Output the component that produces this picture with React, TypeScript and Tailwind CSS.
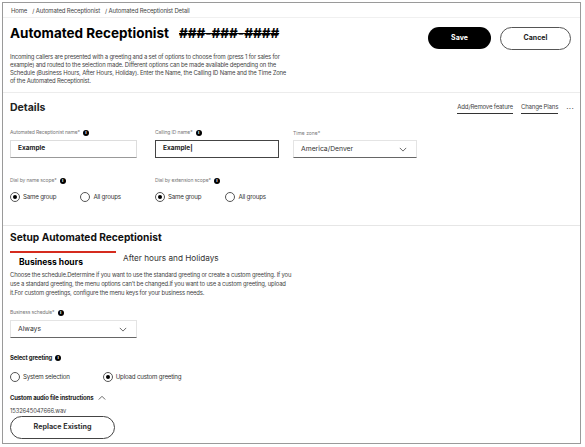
function Info() {
  return (
    <span className="inline-flex h-[6px] w-[6px] items-center justify-center rounded-full bg-black text-[5px] font-bold leading-none text-white">
      i
    </span>
  );
}

function FieldLabel({ text, info = true }: { text: string; info?: boolean }) {
  return (
    <div className="flex h-[9px] items-center gap-[3px] text-[5px] tracking-[-0.12px] text-[#777]">
      <span>{text}*</span>
      {info && <Info />}
    </div>
  );
}

function Radio({ label, checked = false }: { label: string; checked?: boolean }) {
  return (
    <div className="flex items-center gap-[3px] text-[6.2px] tracking-[-0.2px] text-[#333]">
      <span className="flex h-[10px] w-[10px] items-center justify-center rounded-full border border-[#555] bg-white">
        {checked && <span className="h-[4px] w-[4px] rounded-full bg-black" />}
      </span>
      {label}
    </div>
  );
}

function Chevron({ up = false }: { up?: boolean }) {
  return (
    <svg width="8" height="5" viewBox="0 0 10 6" fill="none" stroke="#444" strokeWidth="1">
      <path d={up ? "M1 5.5 5 1.5 9 5.5" : "M1 1 5 5 9 1"} />
    </svg>
  );
}

function Select({ value, width }: { value: string; width: string }) {
  return (
    <div className={`flex h-[18px] items-center justify-between border border-[#e4e4e4] border-b-[#666] pl-[7px] pr-[9px] text-[6.8px] text-[#333] ${width}`}>
      {value}
      <Chevron />
    </div>
  );
}

export default function App() {
  return (
    <div className="h-[447px] w-[585px] bg-white pl-[2px] pt-[2px] font-['Inter',sans-serif] text-black">
      <div className="h-[442px] w-[579px] overflow-hidden border border-[#9a9a9a] bg-white">
        <div className="flex h-[14px] items-center gap-[5px] pl-[8px] pt-[1px] text-[6px] tracking-[-0.15px] text-[#444]">
          <span>Home</span>
          <span>/ Automated Receptionist</span>
          <span>/ Automated Receptionist Detail</span>
        </div>
        <div className="h-[1px] bg-[#f0f0f0]" />

        <div className="flex items-start justify-between pl-[7px] pr-[9px] pt-[9px]">
          <div className="w-[278px]">
            <h1 className="flex h-[13px] items-center gap-[10px] whitespace-nowrap text-[13.5px] font-bold leading-none">
              Automated Receptionist
              <span className="text-[13.5px] font-bold line-through">###-###-####</span>
            </h1>
            <p className="mt-[13px] text-[5.9px] leading-[8px] tracking-[-0.17px] text-[#444]">
              Incoming callers are presented with a greeting and a set of options to choose from (press 1 for sales for example) and routed to the selection made. Different options can be made available depending on the Schedule (Business Hours, After Hours, Holiday). Enter the Name, the Calling ID Name and the Time Zone of the Automated Receptionist.
            </p>
          </div>
          <div className="flex gap-[9px]">
            <button className="h-[22px] w-[63px] rounded-full bg-black text-[7px] font-bold text-white">Save</button>
            <button className="h-[23px] w-[71px] rounded-full border border-[#555] bg-white text-[7px] font-bold text-[#222]">Cancel</button>
          </div>
        </div>

        <div className="mt-[7px] h-[1px] bg-[#ececec]" />

        <div className="flex items-center justify-between pl-[7px] pr-[6px] pt-[8px]">
          <h2 className="text-[10.5px] font-bold leading-[14px] text-[#222]">Details</h2>
          <div className="flex items-center gap-[8px] text-[6.1px] tracking-[-0.2px] text-[#444]">
            <span className="border-b border-[#333] pb-[1px]">Add/Remove feature</span>
            <span className="border-b border-[#333] pb-[1px]">Change Plans</span>
            <span className="text-[8px] leading-none tracking-[0.3px]">···</span>
          </div>
        </div>

        <div className="mt-[13px] flex gap-[18px] pl-[7px]">
          <div className="w-[127px]">
            <FieldLabel text="Automated Receptionist name" />
            <div className="mt-[3px] flex h-[18px] items-center border border-[#ddd] border-b-[#999] pl-[7px] text-[6.5px] font-bold text-[#222]">Example</div>
          </div>
          <div className="w-[124px]">
            <FieldLabel text="Calling ID name" />
            <div className="mt-[3px] flex h-[18px] items-center border border-[#444] pl-[7px] text-[6.5px] font-bold text-[#222]">Example|</div>
          </div>
          <div className="ml-[-4px]">
            <div className="mt-[1px] h-[9px] text-[5px] leading-[9px] text-[#777]">Time zone*</div>
            <div className="mt-[2px]">
              <Select value="America/Denver" width="w-[124px]" />
            </div>
          </div>
        </div>

        <div className="mt-[18px] flex pl-[7px]">
          <div className="w-[145px]">
            <FieldLabel text="Dial by name scope" />
            <div className="mt-[7px] flex gap-[24px]">
              <Radio label="Same group" checked />
              <Radio label="All groups" />
            </div>
          </div>
          <div>
            <FieldLabel text="Dial by extension scope" />
            <div className="mt-[7px] flex gap-[24px]">
              <Radio label="Same group" checked />
              <Radio label="All groups" />
            </div>
          </div>
        </div>

        <div className="mt-[23px] h-[1px] bg-[#e6e6e6]" />

        <div className="pl-[7px] pt-[4px]">
          <h2 className="text-[10.2px] font-bold leading-[14px] text-[#111]">Setup Automated Receptionist</h2>
          <div className="mt-[7px] flex">
            <div className="w-[106px] border-t-[2px] border-[#d52b1e] pl-[9px] pt-[3px] text-[8.5px] font-bold leading-[12px]">Business hours</div>
            <div className="ml-[7px] mt-[1px] text-[8.2px] leading-[12px] text-[#333]">After hours and Holidays</div>
          </div>
          <p className="mt-[2px] w-[284px] text-[5.9px] leading-[9px] tracking-[-0.17px] text-[#444]">
            Choose the schedule.Determine if you want to use the standard greeting or create a custom greeting. If you use a standard greeting, the menu options can't be changed.If you want to use a custom greeting, upload it.For custom greetings, configure the menu keys for your business needs.
          </p>
          <div className="mt-[11px]">
            <FieldLabel text="Business schedule" />
          </div>
          <div className="mt-[3px]">
            <Select value="Always" width="w-[127px]" />
          </div>
          <div className="mt-[15px] flex items-center gap-[3px] text-[6px] font-bold tracking-[-0.15px] text-[#222]">
            Select greeting <Info />
          </div>
          <div className="mt-[10px] flex gap-[33px]">
            <Radio label="System selection" />
            <Radio label="Upload custom greeting" checked />
          </div>
          <div className="mt-[11px] flex items-center gap-[5px] text-[6px] font-bold tracking-[-0.15px] text-[#222]">
            Custom audio file instructions <Chevron up />
          </div>
          <div className="mt-[5px] text-[5.8px] leading-[8px] tracking-[-0.1px] text-[#444]">1532645047666.wav</div>
          <button className="mt-[1px] block h-[23px] w-[105px] rounded-full border border-[#444] bg-white text-[7.2px] font-bold text-[#333]">Replace Existing</button>
        </div>
      </div>
    </div>
  );
}
